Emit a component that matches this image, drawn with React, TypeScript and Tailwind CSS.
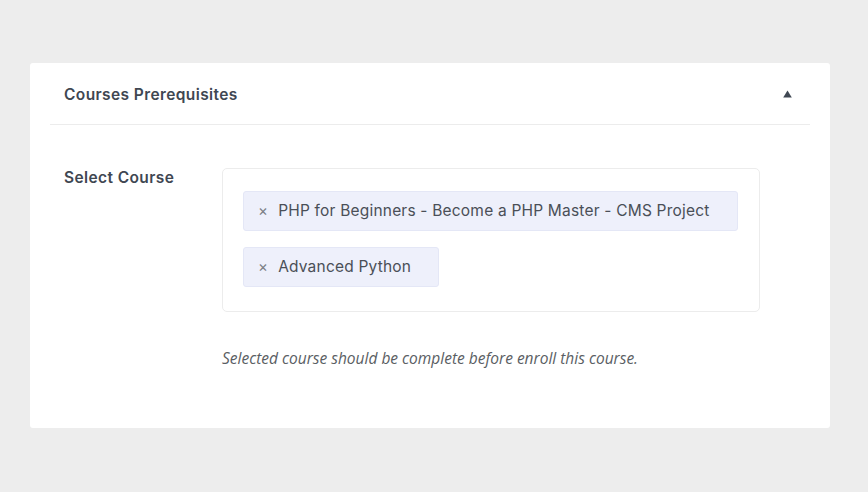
export default function App() {
  const selected = [
    "PHP for Beginners - Become a PHP Master - CMS Project",
    "Advanced Python",
  ];

  return (
    <div className="min-h-screen bg-[#ededed] px-[30px] pt-[63px] font-['Inter','Noto_Sans',sans-serif]">
      <div className="w-[800px] rounded-[3px] bg-white pb-[58px]">
        {/* Header */}
        <div className="mx-[20px] flex h-[62px] items-center justify-between border-b border-[#ececec] pl-[14px] pr-[18px]">
          <h2 className="pt-[3px] text-[15.5px] font-semibold tracking-[0.4px] text-[#3f4752]">
            Courses Prerequisites
          </h2>
          <svg width="9" height="8" viewBox="0 0 9 8" className="mt-[1px]">
            <path d="M4.5 0.5 L8.8 7.5 L0.2 7.5 Z" fill="#3f4752" />
          </svg>
        </div>

        {/* Body */}
        <div className="flex pl-[34px] pt-[43px]">
          <label className="mt-[1px] w-[158px] text-[15.5px] font-semibold leading-[18px] tracking-[0.4px] text-[#3f4752]">
            Select Course
          </label>
          <div className="flex flex-col">
            <div className="flex w-[538px] flex-col items-start gap-[16px] rounded-[5px] border border-[#ececec] px-[20px] pb-[24px] pt-[22px]">
              {selected.map((course) => (
                <div
                  key={course}
                  className="flex h-[40px] items-center rounded-[3px] border border-[#e4e7f6] bg-[#eef0fb] pl-[14px] pr-[27px] text-[15.5px] tracking-[0.2px] text-[#4a4f57]"
                >
                  <span className="mr-[10px] text-[15px] text-[#7b7f86]">×</span>
                  {course}
                </div>
              ))}
            </div>
            <p className="mt-[35px] font-['Open_Sans',sans-serif] text-[15.5px] italic text-[#5a5e63]">
              Selected course should be complete before enroll this course.
            </p>
          </div>
        </div>
      </div>
    </div>
  );
}
